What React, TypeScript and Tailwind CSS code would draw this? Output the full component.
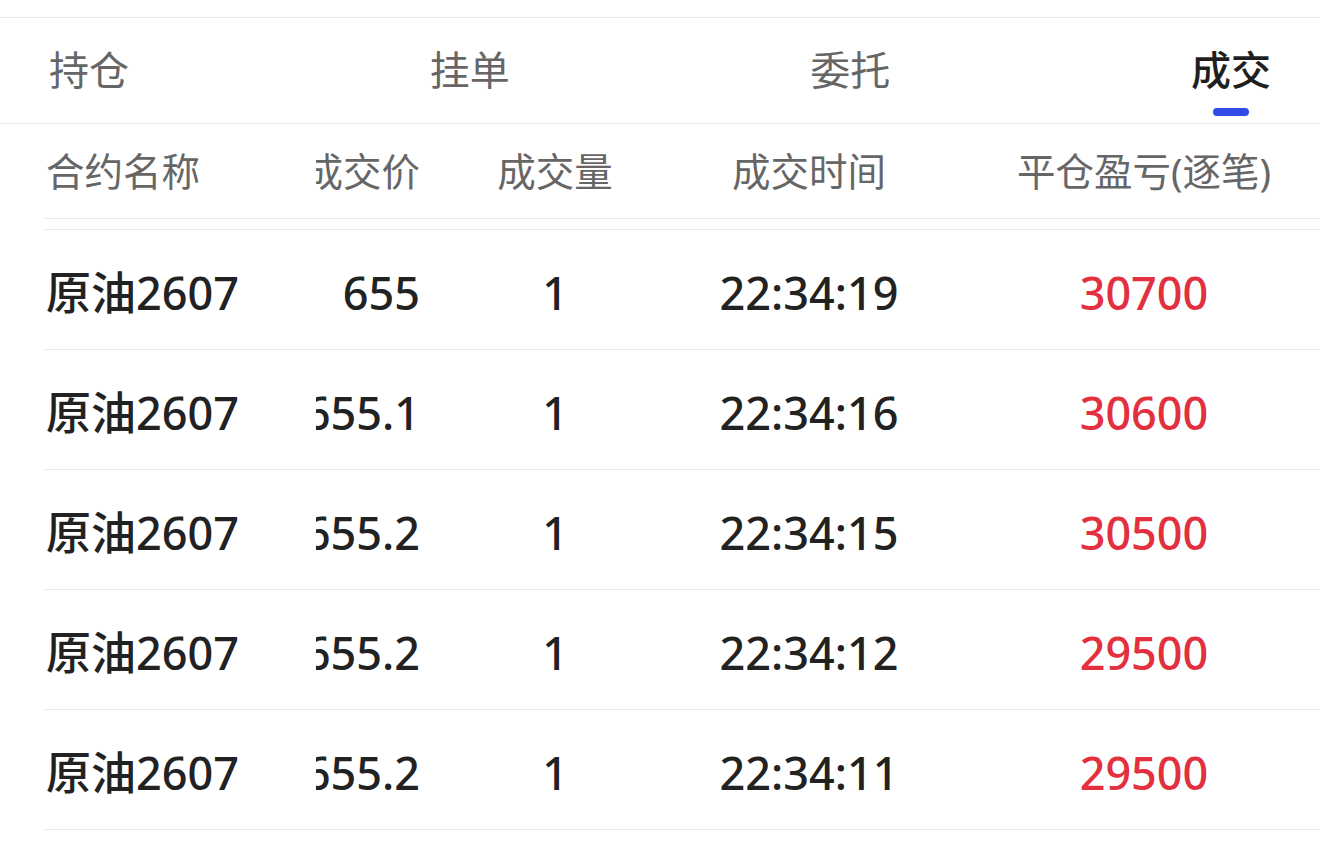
import React from 'react'

const tabs = ['持仓', '挂单', '委托', '成交']

const trades = [
  { name: '原油2607', price: '655', qty: '1', time: '22:34:19', pnl: '30700' },
  { name: '原油2607', price: '655.1', qty: '1', time: '22:34:16', pnl: '30600' },
  { name: '原油2607', price: '655.2', qty: '1', time: '22:34:15', pnl: '30500' },
  { name: '原油2607', price: '655.2', qty: '1', time: '22:34:12', pnl: '29500' },
  { name: '原油2607', price: '655.2', qty: '1', time: '22:34:11', pnl: '29500' },
]

const font = { fontFamily: '"Noto Sans", "Noto Sans CJK SC", sans-serif' }

export default function App() {
  return (
    <div className="w-[1320px] h-[845px] bg-white overflow-hidden" style={font}>
      <div className="h-[17px]" />

      {/* tabs */}
      <div className="border-t border-b border-[#ececec] h-[107px] flex justify-between px-[49px]">
        {tabs.map((t) => {
          const active = t === '成交'
          return (
            <div key={t} className="relative flex items-center h-full">
              <span
                className={
                  active
                    ? 'text-[40px] leading-none font-medium text-[#1f1f1f] -mt-[2px]'
                    : 'text-[40px] leading-none text-[#666666] -mt-[2px]'
                }
              >
                {t}
              </span>
              {active && (
                <div className="absolute left-1/2 -translate-x-1/2 top-[90px] w-[36px] h-[8px] rounded-full bg-[#2f4de6]" />
              )}
            </div>
          )
        })}
      </div>

      {/* header */}
      <div className="ml-[45px] h-[95px] flex items-center border-b border-[#e6e6e6] text-[38.5px] leading-none text-[#666666]">
        <div className="w-[271px] pl-[1px] whitespace-nowrap">合约名称</div>
        <div className="w-[104px] overflow-hidden flex justify-end whitespace-nowrap">
          <span>成交价</span>
        </div>
        <div className="w-[270px] text-center">成交量</div>
        <div className="w-[238px] text-center">成交时间</div>
        <div className="flex-1 pl-[40px] text-center whitespace-nowrap">平仓盈亏(逐笔)</div>
      </div>

      <div className="h-[10px]" />

      {/* rows */}
      <div className="ml-[45px] border-t border-[#e6e6e6]">
        {trades.map((r, i) => (
          <div
            key={i}
            className="h-[120px] flex items-center border-b border-[#e6e6e6] text-[45px] leading-none font-medium text-[#222222] pt-[5px]"
          >
            <div className="w-[271px] pl-[1px] whitespace-nowrap">{r.name}</div>
            <div className="w-[104px] overflow-hidden flex justify-end whitespace-nowrap">
              <span>{r.price}</span>
            </div>
            <div className="w-[270px] text-center">{r.qty}</div>
            <div className="w-[238px] text-center">{r.time}</div>
            <div className="flex-1 pl-[40px] text-center text-[#e3303f]">{r.pnl}</div>
          </div>
        ))}
      </div>
    </div>
  )
}
